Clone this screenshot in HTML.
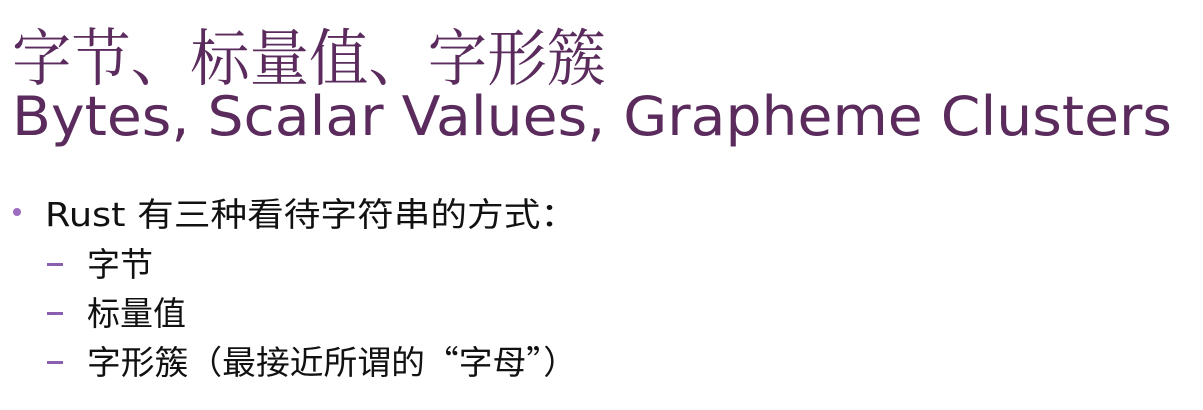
<!DOCTYPE html>
<html><head><meta charset="utf-8"><style>
html,body{margin:0;padding:0;background:#fff;width:1203px;height:410px;overflow:hidden}
svg{display:block}
</style></head><body>
<svg width="1203" height="410" xmlns="http://www.w3.org/2000/svg">
<text x="12" y="80" font-family="'Liberation Serif','Noto Serif CJK SC',serif" font-size="62" fill="#5a2b5c" textLength="594" lengthAdjust="spacingAndGlyphs">字节、标量值、字形簇</text>
<text x="12" y="135" font-family="'DejaVu Sans','Liberation Sans',sans-serif" font-size="54" fill="#5a2b5c" textLength="1160" lengthAdjust="spacingAndGlyphs">Bytes, Scalar Values, Grapheme Clusters</text>
<circle cx="17" cy="212" r="4" fill="#9b6cc0"/>
<text x="45" y="226" font-family="'DejaVu Sans','Noto Sans CJK SC',sans-serif" font-size="33" fill="#111" textLength="532" lengthAdjust="spacingAndGlyphs">Rust 有三种看待字符串的方式：</text>
<rect x="47" y="263" width="16" height="3" fill="#8a5fb0"/>
<rect x="47" y="312" width="16" height="3" fill="#8a5fb0"/>
<rect x="47" y="361" width="16" height="3" fill="#8a5fb0"/>
<g font-family="'Noto Sans CJK SC',sans-serif" font-size="33" fill="#111">
<text x="87" y="276">字节</text>
<text x="87" y="325">标量值</text>
<text x="87" y="374" textLength="490" lengthAdjust="spacingAndGlyphs">字形簇（最接近所谓的“字母”）</text>
</g>
</svg>
</body></html>
